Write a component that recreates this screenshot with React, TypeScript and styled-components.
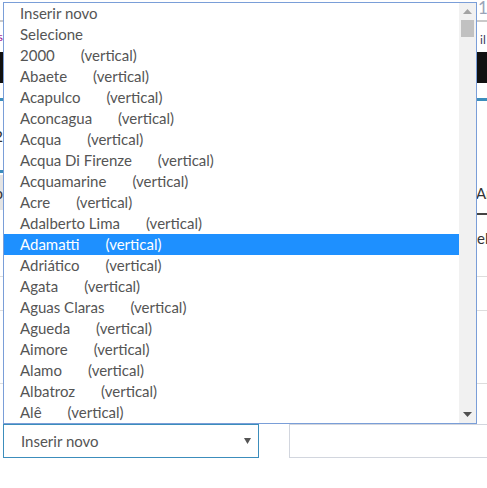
import React from "react";
import styled, { createGlobalStyle } from "styled-components";

const GlobalStyle = createGlobalStyle`
  html, body {
    margin: 0;
    padding: 0;
    background: #fff;
  }
  body {
    font-family: Lato, "Open Sans", sans-serif;
    overflow: hidden;
  }
`;

const Page = styled.div`
  position: relative;
  width: 487px;
  height: 488px;
  overflow: hidden;
  background: #fff;
`;

/* ---------- page behind the open list ---------- */

const TitleBar = styled.div`
  height: 20px;
  border-bottom: 2px solid #c9c9c9;
  padding-left: 478px;
  font-size: 17px;
  line-height: 15px;
  color: #9aa4b8;
  white-space: nowrap;
`;

const EdgeRow = styled.div<{ $h: number }>`
  display: flex;
  justify-content: space-between;
  align-items: center;
  height: ${(p) => p.$h}px;
  box-sizing: border-box;
`;

const LeftClip = styled.div<{ $color?: string }>`
  width: 3px;
  overflow: hidden;
  display: flex;
  justify-content: flex-end;
  white-space: nowrap;
  color: ${(p) => p.$color ?? "#333"};
`;

const RightClip = styled.div<{ $color?: string }>`
  width: 10px;
  overflow: hidden;
  white-space: nowrap;
  color: ${(p) => p.$color ?? "#333"};
`;

const NavText = styled.span`
  font-size: 12px;
  line-height: 14px;
`;

const DarkBar = styled.div`
  height: 31px;
  background: #111;
`;

const Gap = styled.div<{ $h: number }>`
  height: ${(p) => p.$h}px;
`;

const AccentRule = styled.div`
  height: 3px;
  background: #3c8dbc;
`;

const BodyText = styled.span`
  font-size: 16px;
  line-height: 18px;
`;

const HeadRow = styled.div`
  display: flex;
  justify-content: space-between;
  height: 45px;
  box-sizing: border-box;
`;

const TabStub = styled.div`
  width: 3px;
  border-top: 3px solid #3c8dbc;
  display: flex;
  flex-direction: column;
`;

const TabFace = styled.div`
  margin-top: 2px;
  height: 35px;
  background: #e4e4e4;
  display: flex;
  align-items: center;
  justify-content: flex-end;
  overflow: hidden;
  font-size: 15px;
  color: #333;
`;

const HeadCell = styled.div`
  width: 11px;
  overflow: hidden;
  white-space: nowrap;
  border-bottom: 2px solid #444;
  box-sizing: border-box;
  display: flex;
  align-items: flex-end;
  padding-bottom: 11px;
  font-size: 15px;
  color: #333;
`;

const TableRow = styled.div<{ $h: number }>`
  height: ${(p) => p.$h}px;
  box-sizing: border-box;
  border-bottom: 1px solid #ddd;
  padding-left: 477px;
  padding-top: 14px;
  white-space: nowrap;
  font-size: 15px;
  line-height: 18px;
  color: #333;
`;

const FormRow = styled.div`
  display: flex;
  gap: 30px;
  padding-left: 3px;
`;

const SelectBox = styled.div`
  flex: 0 0 256px;
  height: 34px;
  box-sizing: border-box;
  border: 1px solid #3c8dbc;
  display: flex;
  align-items: center;
  justify-content: space-between;
  padding: 0 7px 0 17px;
  font-size: 15px;
  color: #555;
`;

const TextField = styled.div`
  flex: 0 0 240px;
  height: 34px;
  box-sizing: border-box;
  border: 1px solid #d2d6de;
`;

/* ---------- open option list ---------- */

const ListPopup = styled.div`
  position: absolute;
  left: 3px;
  top: 2px;
  width: 474px;
  height: 422px;
  box-sizing: border-box;
  border: 1px solid #7a9ed8;
  background: #fff;
  display: flex;
`;

const Options = styled.div`
  flex: 1;
  overflow: hidden;
`;

const Option = styled.div<{ $active?: boolean }>`
  height: 21px;
  line-height: 21px;
  padding-left: 16px;
  font-size: 15px;
  white-space: nowrap;
  color: ${(p) => (p.$active ? "#fff" : "#555")};
  background: ${(p) => (p.$active ? "#1e90ff" : "transparent")};
`;

const Orientation = styled.span`
  margin-left: 26px;
`;

const ScrollTrack = styled.div`
  width: 17px;
  background: #f1f1f1;
  display: flex;
  flex-direction: column;
`;

const ScrollButton = styled.div`
  height: 17px;
  display: flex;
  align-items: center;
  justify-content: center;
`;

const ScrollThumb = styled.div`
  margin: 0 2px;
  height: 17px;
  background: #c1c1c1;
`;

const TrackFill = styled.div`
  flex: 1;
`;

const Arrow = ({ dir, color }: { dir: "up" | "down"; color: string }) => (
  <svg width="9" height="5" viewBox="0 0 9 5">
    {dir === "up" ? (
      <polygon points="4.5,0 9,5 0,5" fill={color} />
    ) : (
      <polygon points="0,0 9,0 4.5,5" fill={color} />
    )}
  </svg>
);

const places = [
  "2000",
  "Abaete",
  "Acapulco",
  "Aconcagua",
  "Acqua",
  "Acqua Di Firenze",
  "Acquamarine",
  "Acre",
  "Adalberto Lima",
  "Adamatti",
  "Adriático",
  "Agata",
  "Aguas Claras",
  "Agueda",
  "Aimore",
  "Alamo",
  "Albatroz",
  "Alê",
];

const selected = "Adamatti";

export default function App() {
  return (
    <>
      <GlobalStyle />
      <Page>
        <TitleBar>10/2024</TitleBar>
        <EdgeRow $h={30}>
          <LeftClip $color="#a0168f">
            <NavText>Perfis</NavText>
          </LeftClip>
          <RightClip $color="#3b3b5a">
            <NavText>&nbsp;il</NavText>
          </RightClip>
        </EdgeRow>
        <DarkBar />
        <Gap $h={15} />
        <AccentRule />
        <EdgeRow $h={69}>
          <LeftClip>
            <BodyText>2</BodyText>
          </LeftClip>
        </EdgeRow>
        <HeadRow>
          <TabStub>
            <TabFace>o</TabFace>
          </TabStub>
          <HeadCell>Ano</HeadCell>
        </HeadRow>
        <TableRow $h={62}>el</TableRow>
        <TableRow $h={34} />
        <TableRow $h={73} />
        <Gap $h={40} />
        <FormRow>
          <SelectBox>
            <span>Inserir novo</span>
            <svg width="7" height="6" viewBox="0 0 7 6">
              <polygon points="0,0 7,0 3.5,6" fill="#555" />
            </svg>
          </SelectBox>
          <TextField />
        </FormRow>

        <ListPopup role="listbox">
          <Options>
            <Option>Inserir novo</Option>
            <Option>Selecione</Option>
            {places.map((name) => (
              <Option key={name} $active={name === selected}>
                {name}
                <Orientation>(vertical)</Orientation>
              </Option>
            ))}
          </Options>
          <ScrollTrack>
            <ScrollButton>
              <Arrow dir="up" color="#a3a3a3" />
            </ScrollButton>
            <ScrollThumb />
            <TrackFill />
            <ScrollButton>
              <Arrow dir="down" color="#505050" />
            </ScrollButton>
          </ScrollTrack>
        </ListPopup>
      </Page>
    </>
  );
}
